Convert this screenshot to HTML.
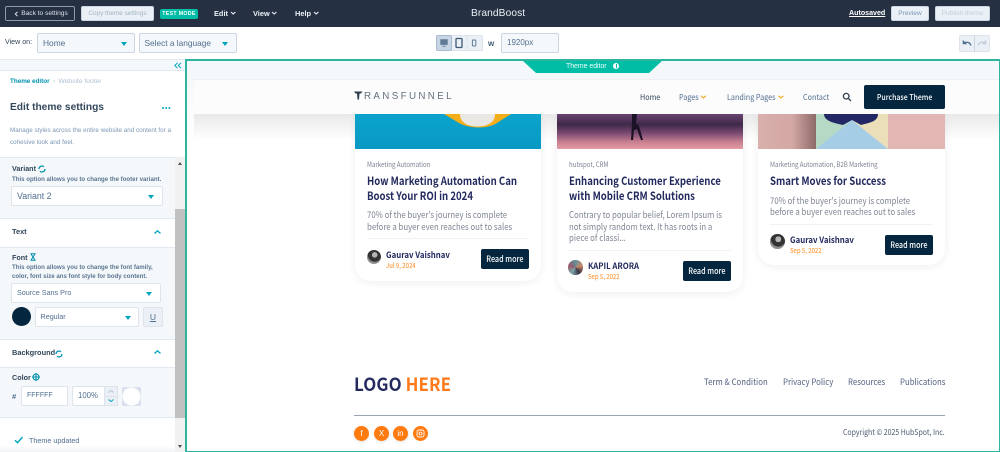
<!DOCTYPE html>
<html><head><meta charset="utf-8">
<style>
html,body{margin:0;padding:0;width:1000px;height:452px;overflow:hidden;background:#fff}
body{position:relative;font-family:"Liberation Sans",sans-serif;color:#33475b}
.a{position:absolute;box-sizing:border-box}
.t{position:absolute;white-space:nowrap;line-height:1}
.n{font-family:"Noto Sans CJK JP","Liberation Sans",sans-serif;transform-origin:0 0}
.btn{position:absolute;box-sizing:border-box;text-align:center;border-radius:2px;white-space:nowrap}
.sel{position:absolute;box-sizing:border-box;background:#f5f8fa;border:1px solid #cbd6e2;border-radius:2px}
.inp{position:absolute;box-sizing:border-box;background:#fff;border:1px solid #dfe3eb;border-radius:2px;white-space:nowrap}
.car{position:absolute;width:0;height:0;border-left:3.5px solid transparent;border-right:3.5px solid transparent;border-top:4px solid #00a4bd}
.card{position:absolute;box-sizing:border-box;background:#fff;border-radius:0 0 16px 16px;box-shadow:0 2px 8px rgba(30,40,70,.07)}
.rm{position:absolute;width:48px;height:20px;background:#04263f;border-radius:2px;color:#fff;font-size:8.5px;line-height:20px;text-align:center;font-weight:500;font-family:"Noto Sans CJK JP","Liberation Sans",sans-serif}
.rm span,.pt span{display:inline-block;transform:scaleX(.85);white-space:nowrap}
.tag{position:absolute;white-space:nowrap;font-size:7px;line-height:1;color:#7c8292;transform:scaleX(.87)}
.ttl{position:absolute;white-space:nowrap;font-size:11.3px;line-height:15px;font-weight:700;color:#232b5e;transform:scaleX(.85)}
.dsc{position:absolute;white-space:nowrap;font-size:9.2px;line-height:11.5px;color:#7f8593;transform:scaleX(.85)}
.au{position:absolute;white-space:nowrap;font-size:8.6px;line-height:1;font-weight:700;color:#232b5e;transform:scaleX(.91)}
.dt{position:absolute;white-space:nowrap;font-size:6.8px;line-height:1;color:#ff9a3c;font-weight:500;transform:scaleX(.86)}
.soc{position:absolute;top:426px;width:15px;height:15px;border-radius:50%;background:#ff7a0f;box-shadow:0 1px 3px rgba(0,0,0,.12);color:#fff;text-align:center;font-size:8px;line-height:15px;font-weight:500}
.nav{font-size:8.2px;transform:scaleX(.88)}
.fl{font-size:8.8px;color:#516080;transform:scaleX(.89)}
</style></head><body>

<!-- top bar -->
<div class="a" style="left:0;top:0;width:1000px;height:27px;background:#253142"></div>
<div class="btn" style="left:5px;top:6px;width:70px;height:15px;border:1px solid #8a9ab0;color:#d9e2ec;font-size:6.6px;line-height:13px;padding-left:9px">Back to settings</div>
<svg class="a" style="left:14px;top:11px" width="5" height="6" viewBox="0 0 5 6"><path d="M3.5 .8 1.3 3l2.2 2.2" fill="none" stroke="#dfe6ee" stroke-width="1"/></svg>
<div class="btn" style="left:81px;top:6px;width:73px;height:15px;background:#eaf0f6;border:1px solid #cbd6e2;color:#a3b2c3;font-size:6.4px;line-height:13px">Copy theme settings</div>
<div class="btn" style="left:160px;top:9px;width:38px;height:10px;background:#00bda5;color:#fff;font-size:5.2px;font-weight:700;line-height:10px;letter-spacing:.35px">TEST MODE</div>
<div class="t" style="left:214px;top:9.5px;color:#eaf0f6;font-size:7.4px;font-weight:700">Edit</div>
<div class="t" style="left:253px;top:9.5px;color:#eaf0f6;font-size:7.4px;font-weight:700">View</div>
<div class="t" style="left:295px;top:9.5px;color:#eaf0f6;font-size:7.4px;font-weight:700">Help</div>
<svg class="a" style="left:0;top:0" width="340" height="27" fill="none" stroke="#eaf0f6" stroke-width="1.1"><path d="M231 12l2.2 2 2.2-2M272 12l2.2 2 2.2-2M314 12l2.2 2 2.2-2"/></svg>
<div class="t" style="left:471px;top:8.5px;color:#eaf0f6;font-size:10.2px;letter-spacing:.1px">BrandBoost</div>
<div class="t" style="left:849px;top:10px;color:#fff;font-size:7.1px;font-weight:700;text-decoration:underline">Autosaved</div>
<div class="btn" style="left:891px;top:6px;width:38px;height:15px;background:#eaf0f6;border:1px solid #cbd6e2;color:#7c98b6;font-size:6.6px;line-height:13px">Preview</div>
<div class="btn" style="left:935px;top:6px;width:55px;height:15px;background:#eaf0f6;border:1px solid #cbd6e2;color:#c2cfdc;font-size:6.6px;line-height:13px">Publish theme</div>

<!-- toolbar -->
<div class="t" style="left:5px;top:39px;font-size:7.1px;color:#33475b">View on:</div>
<div class="sel" style="left:37px;top:33px;width:98px;height:20px;font-size:8.4px;line-height:18px;padding-left:5px;color:#516f90">Home</div>
<div class="car" style="left:120.5px;top:41.5px"></div>
<div class="sel" style="left:139px;top:33px;width:98px;height:20px;font-size:8.3px;line-height:18px;padding-left:4.500px;color:#516f90">Select a language</div>
<div class="car" style="left:222px;top:41.5px"></div>

<div class="a" style="left:436px;top:35px;width:47px;height:16px;background:#eaf0f6;border:1px solid #dfe3eb;border-radius:2px"></div>
<div class="a" style="left:436px;top:35px;width:16px;height:16px;background:#c7d5e5;border:1px solid #a9bbcf;border-radius:2px"></div>
<svg class="a" style="left:436px;top:35px" width="47" height="16" viewBox="0 0 47 16">
<path d="M4.8 4.8h6.4v4.6H4.8zM6.5 11.2h3" fill="#607a97" stroke="#607a97" stroke-width="1"/>
<rect x="20" y="3.5" width="6" height="9" rx="1" fill="none" stroke="#3f5873" stroke-width="1.3"/>
<rect x="36.4" y="5" width="3.4" height="6" rx=".7" fill="none" stroke="#607a97" stroke-width="1"/>
<path d="M31 0v16" stroke="#dfe3eb"/></svg>
<div class="t" style="left:488px;top:39.5px;font-size:8px;font-weight:700;color:#425b76">w</div>
<div class="sel" style="left:501px;top:33px;width:58px;height:20px;font-size:8px;line-height:18px;padding-left:5px;color:#516f90">1920px</div>
<div class="a" style="left:959px;top:35px;width:31px;height:17px;background:#eaf0f6;border:1px solid #dfe3eb;border-radius:2px"></div>
<div class="a" style="left:974px;top:35px;width:1px;height:17px;background:#cbd6e2"></div>
<svg class="a" style="left:959px;top:35px" width="31" height="17" fill="none" stroke-width="1.3">
<path d="M12 10.5C11 7.5 8.5 6.5 5 7.8" stroke="#516f90"/><path d="M4 5.5v3.5h3.5z" fill="#516f90" stroke="#516f90" stroke-width=".6"/>
<path d="M19 10.5c1-3 3.5-4 7-2.700" stroke="#c0cddb"/><path d="M27 5.500v3.500h-3.500z" fill="#c0cddb" stroke="#c0cddb" stroke-width=".6"/></svg>

<!-- sidebar -->
<div class="a" style="left:0;top:59px;width:185px;height:393px;background:#fff"></div>
<div class="a" style="left:0;top:59px;width:185px;height:12px;background:#f5f8fa;border-top:1px solid #e3e9f0;border-bottom:1px solid #e3e9f0"></div>
<svg class="a" style="left:174px;top:62px" width="8" height="7" fill="none" stroke="#00a4bd" stroke-width="1"><path d="M3.500 .8 .8 3.500l2.700 2.700M7 .8 4.300 3.500 7 6.200"/></svg>
<div class="t" style="left:10px;top:78.500px;font-size:6.300px;font-weight:700;color:#0091ae">Theme editor</div>
<div class="t" style="left:53px;top:78.500px;font-size:6px;color:#b0c1d4">›</div>
<div class="t" style="left:58.500px;top:78.500px;font-size:6.700px;color:#b0c1d4">Website footer</div>
<div class="t" style="left:10px;top:103px;font-size:10.200px;font-weight:700;color:#33475b">Edit theme settings</div>
<div class="a" style="left:161.500px;top:106.500px;width:2px;height:2px;border-radius:50%;background:#00a4bd;box-shadow:3.200px 0 #00a4bd,6.400px 0 #00a4bd"></div>
<div class="t" style="left:10px;top:127.500px;font-size:6.300px;color:#7c98b6">Manage styles across the entire website and content for a</div>
<div class="t" style="left:10px;top:140px;font-size:6.300px;color:#7c98b6">cohesive look and feel.</div>

<div class="a" style="left:0;top:157px;width:175px;height:61px;background:#f5f8fa;border-top:1px solid #e3e9f0"></div>
<div class="t" style="left:12px;top:165px;font-size:7.200px;font-weight:700;color:#33475b">Variant</div>
<svg class="a" style="left:38px;top:165px" width="8" height="8" fill="none" stroke="#0091ae" stroke-width="1.300"><path d="M1 4a3 3 0 0 1 5-2.200M7 4a3 3 0 0 1-5 2.200"/></svg>
<div class="t" style="left:12px;top:177px;font-size:6.100px;font-weight:700;color:#5a7592">This option allows you to change the footer variant.</div>
<div class="inp" style="left:11px;top:186px;width:152px;height:20px;font-size:8.800px;line-height:18px;padding-left:5px;color:#516f90;border-color:#dfe3eb">Variant 2</div>
<div class="car" style="left:148px;top:194.500px"></div>

<div class="a" style="left:0;top:218px;width:175px;height:30px;background:#fff;border-top:1px solid #e3e9f0;border-bottom:1px solid #e3e9f0"></div>
<div class="t" style="left:12px;top:228px;font-size:7.400px;font-weight:700;color:#33475b">Text</div>
<svg class="a" style="left:153px;top:229px" width="9" height="6" fill="none" stroke="#00a4bd" stroke-width="1.300"><path d="M1.500 4.500 4.500 1.800 7.500 4.500"/></svg>

<div class="a" style="left:0;top:248px;width:175px;height:91px;background:#f5f8fa"></div>
<div class="t" style="left:12px;top:253.500px;font-size:7.200px;font-weight:700;color:#33475b">Font</div>
<svg class="a" style="left:30px;top:253px" width="6" height="8" fill="none" stroke="#0091ae" stroke-width="1"><path d="M1 .8h4L1 7.200h4zM1 .8 5 7.200"/></svg>
<div class="t" style="left:12px;top:265px;font-size:6.100px;font-weight:700;color:#5a7592">This option allows you to change the font family,</div>
<div class="t" style="left:12px;top:274px;font-size:6.100px;font-weight:700;color:#5a7592">color, font size ans font style for body content.</div>
<div class="inp" style="left:11px;top:283px;width:150px;height:20px;font-size:7.200px;line-height:18px;padding-left:5px;color:#516f90">Source Sans Pro</div>
<div class="car" style="left:146px;top:292px"></div>
<div class="a" style="left:12px;top:307px;width:19px;height:19px;border-radius:50%;background:#04263f"></div>
<div class="inp" style="left:35px;top:307px;width:104px;height:20px;font-size:7.200px;line-height:18px;padding-left:4.500px;color:#516f90">Regular</div>
<div class="car" style="left:124.500px;top:316px"></div>
<div class="btn" style="left:143px;top:307px;width:20px;height:20px;background:#eaf0f6;border:1px solid #dfe3eb;color:#516f90;font-size:8.500px;line-height:18px;text-decoration:underline">U</div>

<div class="a" style="left:0;top:339px;width:175px;height:29px;background:#fff;border-top:1px solid #e3e9f0;border-bottom:1px solid #e3e9f0"></div>
<div class="t" style="left:12px;top:349px;font-size:7.400px;font-weight:700;color:#33475b">Background</div>
<svg class="a" style="left:55px;top:350px" width="8" height="8" fill="none" stroke="#0091ae" stroke-width="1.200"><path d="M1 4a3 3 0 0 1 5-2.200M7 4a3 3 0 0 1-5 2.200"/></svg>
<svg class="a" style="left:153px;top:349px" width="9" height="6" fill="none" stroke="#00a4bd" stroke-width="1.300"><path d="M1.500 4.500 4.500 1.800 7.500 4.500"/></svg>

<div class="a" style="left:0;top:368px;width:175px;height:50px;background:#f5f8fa;border-bottom:1px solid #e3e9f0"></div>
<div class="t" style="left:12px;top:373.500px;font-size:7.200px;font-weight:700;color:#33475b">Color</div>
<svg class="a" style="left:32px;top:373px" width="8" height="8" fill="none" stroke="#0091ae" stroke-width="1.100"><circle cx="4" cy="4" r="3"/><path d="M4 0v8M0 4h8"/></svg>
<div class="t" style="left:12px;top:392.500px;font-size:7.500px;font-weight:700;color:#516f90">#</div>
<div class="inp" style="left:21px;top:386px;width:47px;height:20px;font-size:7px;line-height:18px;padding-left:5px;color:#516f90">FFFFFF</div>
<div class="inp" style="left:72px;top:386px;width:46px;height:20px;font-size:7.800px;line-height:18px;padding-left:5px;color:#516f90">100%</div>
<div class="a" style="left:104px;top:386px;width:14px;height:20px;background:#eaf0f6;border:1px solid #dfe3eb"></div>
<div class="a" style="left:104px;top:396px;width:14px;height:1px;background:#dfe3eb"></div>
<svg class="a" style="left:107px;top:388px" width="8" height="16" fill="none" stroke-width="1"><path d="M1.500 4.500 4 2.500l2.500 2" stroke="#b0c1d4"/><path d="M1.500 11.500 4 13.500l2.500-2" stroke="#00a4bd"/></svg>
<div class="a" style="left:122px;top:387px;width:19px;height:19px;background:#d5deea;border-radius:2px"></div>
<div class="a" style="left:124px;top:389px;width:7px;height:7px;background:#f5f8fa"></div>
<div class="a" style="left:132px;top:397px;width:7px;height:7px;background:#f5f8fa"></div>
<div class="a" style="left:122px;top:387px;width:19px;height:19px;border-radius:50%;background:#fff;border:1px solid #eef2f6"></div>

<svg class="a" style="left:14px;top:436px" width="10" height="8" fill="none" stroke="#00a4bd" stroke-width="1.400"><path d="M1 4.200 3.500 6.700 8.500 1"/></svg>
<div class="t" style="left:29px;top:436.500px;font-size:7.200px;color:#516f90">Theme updated</div>
<div class="a" style="left:0;top:446px;width:175px;height:6px;background:linear-gradient(#fff,#f1f4f7)"></div>

<div class="a" style="left:175px;top:157px;width:10px;height:295px;background:#f1f1f1"></div>
<div class="a" style="left:175px;top:209px;width:10px;height:209px;background:#c1c1c1"></div>
<div class="a" style="left:177.500px;top:162px;border-left:2.500px solid transparent;border-right:2.500px solid transparent;border-bottom:3px solid #505050"></div>
<div class="a" style="left:177.500px;top:445px;border-left:2.500px solid transparent;border-right:2.500px solid transparent;border-top:3px solid #505050"></div>

<!-- preview -->
<div class="a" style="left:185px;top:59px;width:815px;height:393px;background:#fff"></div>
<div class="a" style="left:187px;top:61px;width:812px;height:18px;background:#f5f8fa"></div>
<div class="a" style="left:187px;top:79px;width:7px;height:60px;background:linear-gradient(#f5f8fa,#fff)"></div>
<div class="a" style="left:194px;top:114px;width:806px;height:26px;background:linear-gradient(#e9e9e9,#fff)"></div>

<!-- cards -->
<div class="card" style="left:355px;top:114px;width:186px;height:167px"></div>
<svg class="a" style="left:355px;top:114px" width="186" height="35"><defs><linearGradient id="g1" x1="0" y1="0" x2="0" y2="1"><stop offset="0" stop-color="#0ba3cc"/><stop offset="1" stop-color="#0899c4"/></linearGradient></defs><rect width="186" height="35" fill="url(#g1)"/><path d="M89 0h67l-14 9c-9 6-27 6-38 0z" fill="#f3ae1a"/><path d="M105 0h35c0 8-7 12.500-17.500 12.500S105 8 105 0z" fill="#e9e8e4"/></svg>
<div class="tag n" style="left:366.500px;top:161.500px">Marketing Automation</div>
<div class="ttl n" style="left:366.500px;top:173.500px">How Marketing Automation Can<br>Boost Your ROI in 2024</div>
<div class="dsc n" style="left:366.500px;top:209px">70% of the buyer's journey is complete<br>before a buyer even reaches out to sales</div>
<div class="a" style="left:367px;top:238px;width:162px;height:1px;background:#f1f2f4"></div>
<div class="a" style="left:366.500px;top:249.500px;width:14.500px;height:14.500px;border-radius:50%;background:radial-gradient(circle at 55% 35%,#b5b5b5 0 22%,#333 24% 55%,#8f8f8f 60%)"></div>
<div class="au n" style="left:386px;top:250.500px">Gaurav Vaishnav</div>
<div class="dt n" style="left:386px;top:261.500px">Jul 9, 2024</div>
<div class="rm" style="left:481px;top:249px"><span>Read more</span></div>

<div class="card" style="left:557px;top:114px;width:186px;height:178px"></div>
<svg class="a" style="left:557px;top:114px" width="186" height="35"><defs><linearGradient id="g2" x1="0" y1="0" x2="0" y2="1"><stop offset="0" stop-color="#6a4474"/><stop offset=".3" stop-color="#3f2848"/><stop offset=".55" stop-color="#7b4a72"/><stop offset=".8" stop-color="#c98090"/><stop offset="1" stop-color="#e39ca4"/></linearGradient></defs><rect width="186" height="35" fill="url(#g2)"/><path d="M75 0h5l-1 9 3 3 4 14h-2l-4-11-3 1-1 10h-2l1-16z" fill="#1c1226"/></svg>
<div class="tag n" style="left:568.500px;top:161.500px">hubspot, CRM</div>
<div class="ttl n" style="left:568.500px;top:173.500px">Enhancing Customer Experience<br>with Mobile CRM Solutions</div>
<div class="dsc n" style="left:568.500px;top:209px">Contrary to popular belief, Lorem Ipsum is<br>not simply random text. It has roots in a<br>piece of classi...</div>
<div class="a" style="left:569px;top:250px;width:162px;height:1px;background:#f1f2f4"></div>
<div class="a" style="left:568px;top:260px;width:14.500px;height:14.500px;border-radius:50%;background:conic-gradient(#5f8f9a,#c98a6a,#3a3346,#7aa6a8,#9c5a6a,#5f8f9a)"></div>
<div class="au n" style="left:588px;top:262px">KAPIL ARORA</div>
<div class="dt n" style="left:588px;top:273px">Sep 5, 2022</div>
<div class="rm" style="left:683px;top:261px"><span>Read more</span></div>

<div class="card" style="left:758px;top:114px;width:187px;height:151px"></div>
<div class="a" style="left:758px;top:114px;width:187px;height:35px;background:#e2b7b3;overflow:hidden">
<div class="a" style="left:0;top:0;width:58px;height:35px;background:linear-gradient(90deg,#d9b0ac 0,#d3a7a3 60%,#8c6a68 100%)"></div>
<div class="a" style="left:58px;top:0;width:72px;height:35px;background:#eadfb8"></div>
<div class="a" style="left:58px;top:0;width:36px;height:35px;background:#b5d9c4"></div>
<svg class="a" style="left:58px;top:0" width="72" height="35"><path d="M8 0h54c0 8-10 9-17 11L36 6l-9 5C18 9 8 7 8 0z" fill="#232766"/><path d="M36 6 72 35H0z" fill="#a6cde6"/></svg>
</div>
<div class="tag n" style="left:770px;top:161.500px">Marketing Automation, B2B Marketing</div>
<div class="ttl n" style="left:770px;top:173.500px">Smart Moves for Success</div>
<div class="dsc n" style="left:770px;top:194.500px">70% of the buyer's journey is complete<br>before a buyer even reaches out to sales</div>
<div class="a" style="left:770px;top:224px;width:163px;height:1px;background:#f1f2f4"></div>
<div class="a" style="left:770px;top:234px;width:14.500px;height:14.500px;border-radius:50%;background:radial-gradient(circle at 55% 35%,#b5b5b5 0 22%,#333 24% 55%,#8f8f8f 60%)"></div>
<div class="au n" style="left:790px;top:235.500px">Gaurav Vaishnav</div>
<div class="dt n" style="left:790px;top:246.500px">Sep 5, 2022</div>
<div class="rm" style="left:885px;top:234.500px"><span>Read more</span></div>

<!-- site header -->
<div class="a" style="left:194px;top:79px;width:806px;height:35px;background:#fcfcfc;border-top:1px solid #eef0f3"></div>
<svg class="a" style="left:354px;top:91px" width="9" height="9"><path d="M0 .5h8.500L7 2.500H5.500L5 8.500H3.500L3 2.500H1.500z" fill="#2f3d4c"/></svg>
<div class="t" style="left:364px;top:91.500px;font-size:9.800px;letter-spacing:2.350px;color:#66717d;font-weight:400">RANSFUNNEL</div>
<div class="t n nav" style="left:639.500px;top:92.500px;color:#33475b">Home</div>
<div class="t n nav" style="left:678.500px;top:92.500px;color:#516f90">Pages</div>
<div class="t n nav" style="left:726.500px;top:92.500px;color:#516f90">Landing Pages</div>
<div class="t n nav" style="left:803px;top:92.500px;color:#516f90">Contact</div>
<svg class="a" style="left:690px;top:91px" width="100" height="12" fill="none" stroke="#f5a623" stroke-width="1.100"><path d="M11 4.800l2.400 2.200 2.400-2.200M88.500 4.800l2.400 2.200 2.400-2.200"/></svg>
<svg class="a" style="left:842px;top:92px" width="10" height="10" fill="none" stroke="#2f3f50" stroke-width="1.300"><circle cx="4.200" cy="4.200" r="2.800"/><path d="M6.400 6.400 9 9"/></svg>
<div class="a pt" style="left:864px;top:85px;width:81px;height:24px;background:#04263f;border-radius:2px;color:#fff;font-size:8.200px;line-height:24px;text-align:center;font-weight:500;font-family:'Noto Sans CJK JP','Liberation Sans',sans-serif"><span>Purchase Theme</span></div>

<!-- ribbon -->
<svg class="a" style="left:522px;top:59px" width="142" height="15"><path d="M0 1h141L127 14H14z" fill="#00bda5"/></svg>
<div class="t" style="left:566px;top:63.500px;font-size:6.900px;color:#f2fffd">Theme editor</div>
<div class="a" style="left:613px;top:62.500px;width:6px;height:6px;border-radius:50%;background:#fff"></div>
<div class="a" style="left:615.500px;top:63.500px;width:1px;height:4px;background:#00bda5"></div>

<!-- footer -->
<div class="t n" style="left:354px;top:375px;font-size:18px;font-weight:700;color:#232b5e;letter-spacing:.1px;transform:scaleX(.94)">LOGO <span style="color:#ff7a1a">HERE</span></div>
<div class="t n fl" style="left:703.500px;top:377.500px">Term &amp; Condition</div>
<div class="t n fl" style="left:782.500px;top:377.500px">Privacy Policy</div>
<div class="t n fl" style="left:847.500px;top:377.500px">Resources</div>
<div class="t n fl" style="left:899.500px;top:377.500px">Publications</div>
<div class="a" style="left:354px;top:415px;width:591px;height:1px;background:#9aa4b0"></div>
<div class="soc" style="left:354px">f</div>
<div class="soc" style="left:374px">X</div>
<div class="soc" style="left:393px">in</div>
<svg class="a" style="left:413px;top:426px" width="15" height="15"><circle cx="7.500" cy="7.500" r="7.500" fill="#ff7a0f"/><rect x="4" y="4" width="7" height="7" rx="2" fill="none" stroke="#fff" stroke-width=".9"/><circle cx="7.500" cy="7.500" r="1.500" fill="none" stroke="#fff" stroke-width=".8"/></svg>
<div class="t n" style="left:842.500px;top:428.500px;font-size:7.900px;color:#4a5a70;transform:scaleX(.88)">Copyright © 2025 HubSpot, Inc.</div>

<!-- frame -->
<div class="a" style="left:185px;top:59px;width:815px;height:393px;border:2px solid #2db5a0;border-width:2px 1px 1px 2px;pointer-events:none"></div>
</body></html>
